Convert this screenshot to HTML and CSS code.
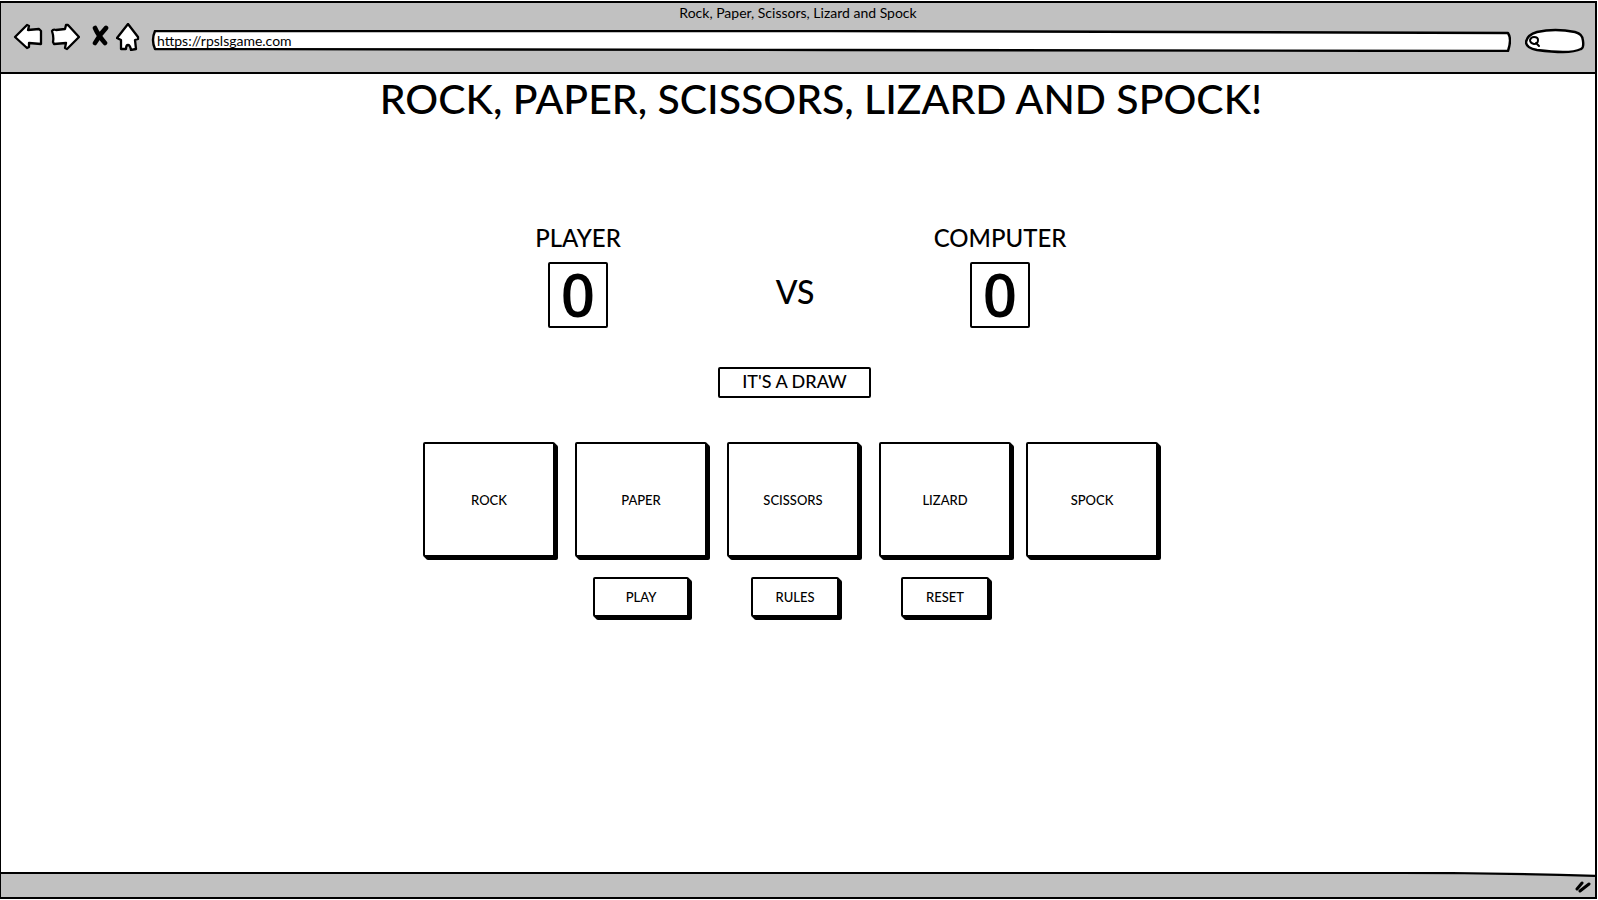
FILE: index.html
```html
<!DOCTYPE html>
<html lang="en">
<head>
<meta charset="utf-8">
<title>Rock, Paper, Scissors, Lizard and Spock</title>
<link rel="stylesheet" href="styles.css">
</head>
<body>
<div class="window">
  <header class="chrome">
    <div class="window-title">Rock, Paper, Scissors, Lizard and Spock</div>
    <div class="toolbar">
      <nav class="nav" aria-label="Browser">
        <button class="icon-btn" type="button" aria-label="Back"><svg width="30" height="28" viewBox="0 0 30 28"><path d="M2 14 L14 2 L16 3 L15 7 L26 6 L28 8 L28 21 L16 20 L16 24 L14 25 Z"/></svg></button>
        <button class="icon-btn" type="button" aria-label="Forward"><svg width="30" height="28" viewBox="0 0 30 28"><path d="M2 8 Q3 6 6 7 L15 6 L16 2 L18 2 L29 14 L17 26 L15 25 L16 20 L4 21 L3 19 Q4 14 2 8 Z"/></svg></button>
        <button class="icon-btn stop" type="button" aria-label="Stop"><svg width="18" height="22" viewBox="0 0 18 22"><path class="cross" d="M4 4 Q7 11 14 19 M15 4 Q9 10 4 19"/></svg></button>
        <button class="icon-btn" type="button" aria-label="Home"><svg width="24" height="28" viewBox="0 0 24 28"><path d="M12 1 L22 14 L22 16 L19 17 L20 26 L15 27 Q14 22 12 22 Q10 22 10 26 L5 26 L5 17 L1 15 Z"/></svg></button>
      </nav>
      <div class="field address">
        <svg class="field-shape" viewBox="0 0 1360 22" preserveAspectRatio="none"><path d="M4 1 L680 1 L1357 3 Q1361 9 1357 21 L680 20 L4 19 Q0 10 4 1 Z"/></svg>
        <input class="address-input" type="text" aria-label="Address" value="https://rpslsgame.com">
      </div>
      <div class="field search">
        <svg class="field-shape" viewBox="0 0 60 26" preserveAspectRatio="none"><path d="M12 4 Q30 0 50 4 Q58 6 58 13 Q59 20 56 21 Q50 24 38 24 Q28 24 12 22 Q1 20 1 14 Q2 7 12 4 Z"/></svg>
        <svg class="search-icon" width="12" height="12" viewBox="0 0 12 12"><path d="M5 1 Q9 1 9 4 Q9 8 5 8 Q1 7 1 4 Q2 1 5 1 M7 7 L10 10"/></svg>
        <input class="search-input" type="text" aria-label="Search">
      </div>
    </div>
  </header>

  <main class="page">
    <h1 class="title">ROCK, PAPER, SCISSORS, LIZARD AND SPOCK!</h1>
    <section class="game">
      <div class="scores">
        <div class="side">
          <h2 class="side-name">PLAYER</h2>
          <div class="score sketch">0</div>
        </div>
        <div class="versus">VS</div>
        <div class="side">
          <h2 class="side-name">COMPUTER</h2>
          <div class="score sketch">0</div>
        </div>
      </div>
      <div class="result sketch">IT'S A DRAW</div>
      <div class="moves">
        <button class="move sketch raised" type="button">ROCK</button>
        <button class="move sketch raised" type="button">PAPER</button>
        <button class="move sketch raised" type="button">SCISSORS</button>
        <button class="move sketch raised" type="button">LIZARD</button>
        <button class="move sketch raised" type="button">SPOCK</button>
      </div>
      <div class="actions">
        <button class="action play sketch raised" type="button">PLAY</button>
        <button class="action sketch raised" type="button">RULES</button>
        <button class="action sketch raised" type="button">RESET</button>
      </div>
    </section>
  </main>

  <footer class="status">
    <svg class="status-shape" viewBox="0 0 1594 26" preserveAspectRatio="none"><path class="status-fill" d="M0 1 L1460 1 L1594 4 L1594 26 L0 26 Z"/><path class="status-line" d="M0 1 L1400 1 Q1500 1 1594 4"/></svg>
    <svg class="grip" width="16" height="14" viewBox="0 0 16 14"><path d="M2 9 L7 3 M5 11 L14 4"/></svg>
  </footer>
</div>
</body>
</html>
```
FILE: styles.css
```css
* {
  box-sizing: border-box;
}

body {
  margin: 0;
  background: #fff;
  color: #000;
  font-family: Lato, "Open Sans", sans-serif;
}

button,
input {
  font: inherit;
  color: inherit;
}

.window {
  display: flex;
  flex-direction: column;
  min-height: calc(100vh - 2px);
  margin: 1px 1px 1px 0;
  border: 2px solid #000;
  border-left-width: 1px;
}

.chrome {
  display: flex;
  flex-direction: column;
  height: 71px;
  background: #c1c1c1;
  border-bottom: 2px solid #000;
}

.window-title {
  font-size: 14px;
  line-height: 20px;
  text-align: center;
}

.toolbar {
  display: flex;
  align-items: flex-start;
  padding: 0 10px 0 12px;
}

.nav {
  display: flex;
  align-items: flex-start;
  gap: 7px;
  margin-right: 11px;
}

.icon-btn {
  display: flex;
  padding: 0;
  border: 0;
  background: none;
}

.stop {
  padding: 1px 0 0 4px;
}

.icon-btn path {
  fill: #fff;
  stroke: #000;
  stroke-width: 2.3;
  stroke-linejoin: round;
}

.icon-btn .cross {
  fill: none;
  stroke-width: 4.6;
  stroke-linecap: round;
}

.field {
  position: relative;
  display: flex;
}

.address {
  flex: 1;
  height: 22px;
  margin: 7px 14px 0 0;
}

.search {
  width: 60px;
  height: 26px;
  margin-top: 5px;
}

.field-shape {
  position: absolute;
  inset: 0;
  width: 100%;
  height: 100%;
}

.field-shape path {
  fill: #fff;
  stroke: #000;
  stroke-width: 2.4;
  stroke-linejoin: round;
  vector-effect: non-scaling-stroke;
}

.address-input,
.search-input {
  position: relative;
  flex: 1;
  min-width: 0;
  padding: 0 6px;
  border: 0;
  background: none;
  font-size: 14px;
  line-height: 20px;
}

.search-icon {
  position: relative;
  margin: 8px 0 0 4px;
}

.search-icon path {
  fill: none;
  stroke: #000;
  stroke-width: 2;
  stroke-linecap: round;
}

.page {
  flex: 1;
  display: flex;
  flex-direction: column;
  align-items: center;
}

.title {
  margin: 0;
  padding-left: 46px;
  font-size: 41px;
  font-weight: 500;
  line-height: 50px;
}

.game {
  display: flex;
  flex-direction: column;
  width: 740px;
  max-width: 100%;
  margin: 98px 10px 0 0;
}

.scores {
  display: grid;
  grid-template-columns: 310px 1fr 310px;
  padding-right: 8px;
}

.side {
  display: flex;
  flex-direction: column;
  align-items: center;
  gap: 8px;
}

.side-name {
  margin: 0;
  font-size: 24px;
  font-weight: 500;
  line-height: 32px;
}

.sketch {
  border: 2px solid #000;
  border-radius: 2px;
  background: #fff;
}

.score {
  width: 60px;
  height: 66px;
  font-family: "Open Sans", sans-serif;
  font-size: 60px;
  font-weight: 600;
  line-height: 60px;
  text-align: center;
}

.versus {
  align-self: end;
  padding-left: 12px;
  font-size: 32px;
  font-weight: 500;
  line-height: 72px;
  text-align: center;
}

.result {
  width: 153px;
  margin: 39px 0 0 295px;
  padding-bottom: 3px;
  font-size: 18px;
  font-weight: 500;
  line-height: 24px;
  text-align: center;
}

.moves {
  display: flex;
  gap: 20px;
  margin-top: 44px;
}

.raised {
  padding: 0;
  font-size: 13px;
  font-weight: 500;
  box-shadow: 1px 1px 0 #000, 2px 2px 0 #000, 3px 3px 0 #000;
}

.move {
  flex: none;
  width: 132px;
  height: 115px;
}

.move:last-child {
  margin-left: -5px;
}

.actions {
  display: flex;
  gap: 62px;
  margin-top: 20px;
  padding-left: 170px;
}

.action {
  width: 88px;
  height: 40px;
}

.play {
  width: 96px;
}

.status {
  position: relative;
  display: flex;
  justify-content: flex-end;
  height: 25px;
}

.status-shape {
  position: absolute;
  inset: 0;
  width: 100%;
  height: 100%;
}

.status-fill {
  fill: #c1c1c1;
}

.status-line {
  fill: none;
  stroke: #000;
  stroke-width: 2.4;
}

.grip {
  position: relative;
  margin: 8px 4px 0 0;
}

.grip path {
  fill: none;
  stroke: #000;
  stroke-width: 3;
  stroke-linecap: round;
}
```
